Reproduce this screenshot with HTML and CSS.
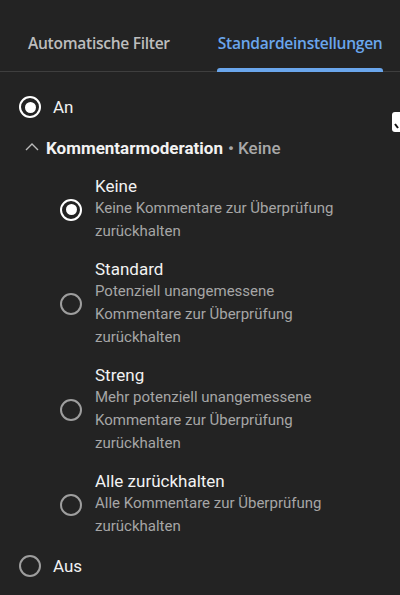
FILE: index.html
```html
<!DOCTYPE html>
<html lang="de">
<head>
<meta charset="utf-8">
<link rel="stylesheet" href="styles.css">
</head>
<body>
<div class="page">
  <nav class="tabs">
    <div class="tab">Automatische Filter</div>
    <div class="tab active">Standardeinstellungen</div>
  </nav>
  <div class="content">
    <div class="row top">
      <span class="radio on"></span><span class="label">An</span>
    </div>
    <div class="section">
      <svg class="chev" width="14" height="10" viewBox="0 0 14 10"><path d="M1 8 L7 2 L13 8" fill="none" stroke="#bbb" stroke-width="1.4"/></svg>
      <span class="sec-title">Kommentarmoderation</span><span class="sec-val">• Keine</span>
    </div>
    <div class="options">
      <div class="opt">
        <span class="radio on"></span>
        <div class="opt-text"><div class="opt-title">Keine</div><div class="opt-desc">Keine Kommentare zur Überprüfung<br>zurückhalten</div></div>
      </div>
      <div class="opt">
        <span class="radio"></span>
        <div class="opt-text"><div class="opt-title">Standard</div><div class="opt-desc">Potenziell unangemessene<br>Kommentare zur Überprüfung<br>zurückhalten</div></div>
      </div>
      <div class="opt">
        <span class="radio"></span>
        <div class="opt-text"><div class="opt-title">Streng</div><div class="opt-desc">Mehr potenziell unangemessene<br>Kommentare zur Überprüfung<br>zurückhalten</div></div>
      </div>
      <div class="opt">
        <span class="radio"></span>
        <div class="opt-text"><div class="opt-title">Alle zurückhalten</div><div class="opt-desc">Alle Kommentare zur Überprüfung<br>zurückhalten</div></div>
      </div>
    </div>
    <div class="row bottom">
      <span class="radio"></span><span class="label">Aus</span>
    </div>
  </div>
  <div class="badge"><svg width="10" height="10" viewBox="0 0 10 10"><path d="M1 3 L4 7" stroke="#111" stroke-width="2" fill="none"/></svg></div>
</div>
</body>
</html>
```
FILE: styles.css
```css
* { box-sizing: border-box; }
html, body { margin: 0; padding: 0; }
body { background: #232323; font-family: Roboto, "Noto Sans", sans-serif; color: #fff; width: 400px; height: 595px; overflow: hidden; }
.page { position: relative; height: 595px; }
.tabs { display: flex; height: 72px; border-bottom: 1px solid #3e3e3e; padding-left: 28px; align-items: flex-end; }
.tab { font-family: "Open Sans", sans-serif; font-size: 15.6px; font-weight: 600; color: #bdbdbd; height: 100%; display: flex; align-items: center; padding-top: 14px; margin-right: 48px; letter-spacing: -0.3px; }
.tab.active { color: #6aa6ec; position: relative; margin-right: 0; }
.tab.active::after { content: ""; position: absolute; left: -1px; right: -1px; bottom: -1px; height: 4px; background: #6aa6ec; border-radius: 3px 3px 0 0; }
.content { padding: 0 0 0 19px; border-bottom: 1px solid #3e3e3e; height: 509px; }
.row { display: flex; align-items: center; height: 24px; }
.row.top { margin-top: 23px; }
.radio { width: 22px; height: 22px; border-radius: 50%; border: 2px solid #9e9e9e; flex: none; position: relative; }
.radio.on { border: 2.5px solid #fff; }
.radio.on::after { content: ""; position: absolute; left: 50%; top: 50%; width: 11px; height: 11px; margin: -5.5px 0 0 -5.5px; border-radius: 50%; background: #fff; }
.label { font-size: 17px; margin-left: 12px; color: #f1f1f1; }
.section { display: flex; align-items: center; margin-top: 17px; margin-left: 6px; height: 24px; }
.chev { margin-right: 7px; margin-top: -2px; }
.sec-title { font-size: 17px; font-weight: 700; color: #f2f2f2; }
.sec-val { font-size: 17px; font-weight: 500; color: #a8a8a8; margin-left: 5px; }
.options { padding-left: 41px; margin-top: 16px; }
.opt { display: flex; align-items: center; margin-bottom: 16px; }
.opt-text { margin-left: 13px; }
.opt-title { font-size: 17px; color: #f2f2f2; line-height: 20px; }
.opt-desc { font-size: 15px; color: #a6a6a6; line-height: 23px; margin-top: 1px; }
.row.bottom { margin-top: 2px; }
.badge { position: absolute; left: 392px; top: 112px; width: 16px; height: 20px; background: #fff; border-radius: 3px; padding: 4px 0 0 2px; }
```
